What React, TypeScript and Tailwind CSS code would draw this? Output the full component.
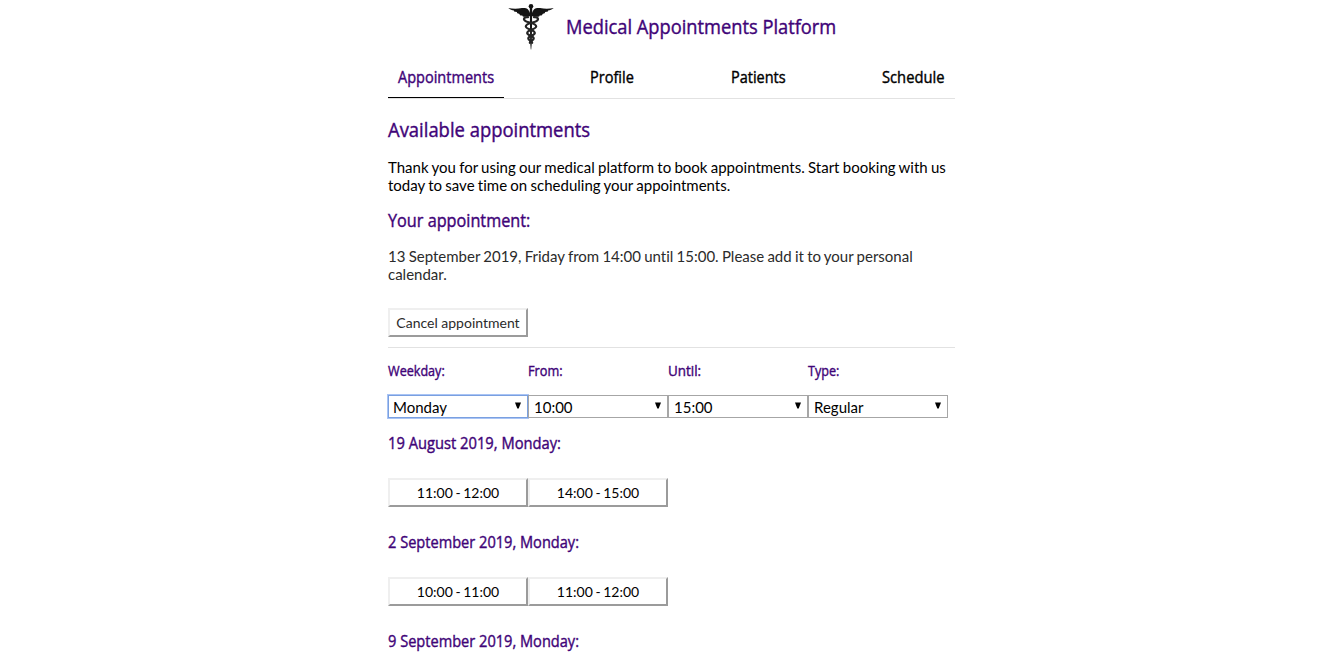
import type { ReactNode } from "react";

const HEADING =
  "font-['Open_Sans','Noto_Sans',sans-serif] font-medium text-[#3f0478] [-webkit-text-stroke:0.4px]";

function Label({ children, scale }: { children: ReactNode; scale: string }) {
  return (
    <span className={`inline-block origin-left whitespace-nowrap ${scale}`}>{children}</span>
  );
}

function Caduceus() {
  return (
    <svg width="46" height="48" viewBox="0 0 46 48" fill="none" className="mt-px shrink-0">
      <g fill="#141414">
        <circle cx="23" cy="3.2" r="2.3" />
        <path d="M22 10C20.500 5.200 17.500 4.400 14 5.100C9 6 4 5.800 0.300 5C2 6.600 4 7.200 6 7.400C5.500 8 6 8.700 9 9.100C8.500 9.800 9.500 10.900 11.500 10.900C11.500 12.200 13 12.800 14.300 12.400C14.800 14 16.500 14.300 18 13.200L22 13.200Z" />
        <path d="M24 10C25.500 5.200 28.500 4.400 32 5.100C37 6 42 5.800 45.700 5C44 6.600 42 7.200 40 7.400C40.500 8 40 8.700 37 9.100C37.500 9.800 36.500 10.900 34.500 10.900C34.500 12.200 33 12.800 31.700 12.400C31.200 14 29.500 14.300 28 13.200L24 13.200Z" />
        <path d="M21.800 5H24.200L23.800 40L23.200 46.500H22.800L22.200 40Z" />
      </g>
      <g stroke="#242424" strokeWidth="2.200" strokeLinecap="round">
        <path d="M20 14.200C16.200 13.800 15 15.800 17 17.700C19 19.600 28.500 20 28.200 23.500C28 26.500 18.800 26.800 19.200 30.200C19.500 32.800 26 33 25.700 35.500C25.500 37.500 21.800 37.500 21.800 39.800" />
        <path d="M26 14.200C29.800 13.800 31 15.800 29 17.700C27 19.600 17.500 20 17.800 23.500C18 26.500 27.200 26.800 26.800 30.200C26.500 32.800 20 33 20.300 35.500C20.500 37.500 24.200 37.500 24.200 39.800" />
      </g>
    </svg>
  );
}

const tabs = [
  { label: "Appointments", box: "w-[116px]", scale: "scale-x-[0.908]", active: true },
  { label: "Profile", box: "w-16", scale: "scale-x-[0.908]", active: false },
  { label: "Patients", box: "w-[75px]", scale: "scale-x-[0.905]", active: false },
  { label: "Schedule", box: "w-[83px]", scale: "scale-x-[0.92]", active: false },
];

const filters = [
  { label: "Weekday:", scale: "scale-x-[0.9]", value: "Monday", focused: true },
  { label: "From:", scale: "scale-x-[0.91]", value: "10:00", focused: false },
  { label: "Until:", scale: "scale-x-[0.96]", value: "15:00", focused: false },
  { label: "Type:", scale: "scale-x-[0.9]", value: "Regular", focused: false },
];

const days = [
  { date: "19 August 2019, Monday:", scale: "scale-x-[0.92]", slots: ["11:00 - 12:00", "14:00 - 15:00"] },
  { date: "2 September 2019, Monday:", scale: "scale-x-[0.912]", slots: ["10:00 - 11:00", "11:00 - 12:00"] },
  { date: "9 September 2019, Monday:", scale: "scale-x-[0.912]", slots: [] },
];

function SlotButton({ children, dim }: { children: ReactNode; dim?: boolean }) {
  return (
    <button
      className={`h-[29px] w-[140px] border-2 border-t-[#efefef] border-r-[#9b9b9b] border-b-[#9b9b9b] border-l-[#efefef] bg-white pb-px text-center text-[14px] leading-[17px] whitespace-nowrap ${dim ? "text-[#2b2b2b]" : "text-black [word-spacing:-1px]"}`}
    >
      {children}
    </button>
  );
}

export default function App() {
  return (
    <div className="h-[652px] overflow-hidden bg-white font-['Lato',sans-serif] text-[15px] text-black [font-variant-ligatures:none]">
      <div className="ml-[388px] w-[567px]">
        <header className={`flex h-[52px] items-center pl-[120px] text-[20px] leading-7 ${HEADING}`}>
          <Caduceus />
          <h1 className="ml-3 pt-[2px]">
            <Label scale="scale-x-[0.914]">Medical Appointments Platform</Label>
          </h1>
        </header>

        <nav className={`mt-[5px] flex h-[42px] justify-between border-b border-[#e2e2e2] text-[16px] leading-6 ${HEADING}`}>
          {tabs.map((t) => (
            <a
              key={t.label}
              className={`h-[41px] pt-2 pl-[10px] ${t.box} ${t.active ? "border-b border-black" : "text-black"}`}
            >
              <Label scale={t.scale}>{t.label}</Label>
            </a>
          ))}
        </nav>

        <h2 className={`mt-[17px] text-[20px] leading-7 ${HEADING}`}>
          <Label scale="scale-x-[0.921]">Available appointments</Label>
        </h2>
        <p className="mt-[14px] leading-[18px] [word-spacing:-0.55px]">
          Thank you for using our medical platform to book appointments. Start booking with us
          <br />
          today to save time on scheduling your appointments.
        </p>

        <h3 className={`mt-[14px] text-[18px] leading-6 ${HEADING}`}>
          <Label scale="scale-x-[0.902]">Your appointment:</Label>
        </h3>
        <p className="mt-[15px] leading-[18px] text-[#2b2b2b] [word-spacing:-0.6px]">
          13 September 2019, Friday from 14:00 until 15:00. Please add it to your personal
          <br />
          calendar.
        </p>

        <div className="mt-[25px] flex h-10 border-b border-[#e2e2e2]">
          <SlotButton dim>Cancel appointment</SlotButton>
        </div>

        <div className="mt-[13px] flex">
          {filters.map((f) => (
            <label key={f.label} className="flex w-[140px] flex-col">
              <span className={`text-[14px] leading-5 ${HEADING}`}>
                <Label scale={f.scale}>{f.label}</Label>
              </span>
              <span
                className={`mt-[14px] flex h-[23px] items-center justify-between border pr-[6px] ${f.focused ? "border-[#7aa0e0] pl-[4px] ring-1 ring-[#a9c4f5]" : "border-[#a6a6a6] pl-[5px]"}`}
              >
                <span className="leading-[18px]">{f.value}</span>
                <svg width="6" height="7" viewBox="0 0 6 7" className="mb-[2px]">
                  <path d="M0 0.500H6L3.700 6.500H2.300Z" fill="#000" />
                </svg>
              </span>
            </label>
          ))}
        </div>

        <div className="mt-[13px]">
          {days.map((d) => (
            <section key={d.date} className="h-[99px]">
              <h4 className={`text-[16px] leading-6 ${HEADING}`}>
                <Label scale={d.scale}>{d.date}</Label>
              </h4>
              <div className="mt-[23px] flex">
                {d.slots.map((s) => (
                  <SlotButton key={s}>{s}</SlotButton>
                ))}
              </div>
            </section>
          ))}
        </div>
      </div>
    </div>
  );
}
